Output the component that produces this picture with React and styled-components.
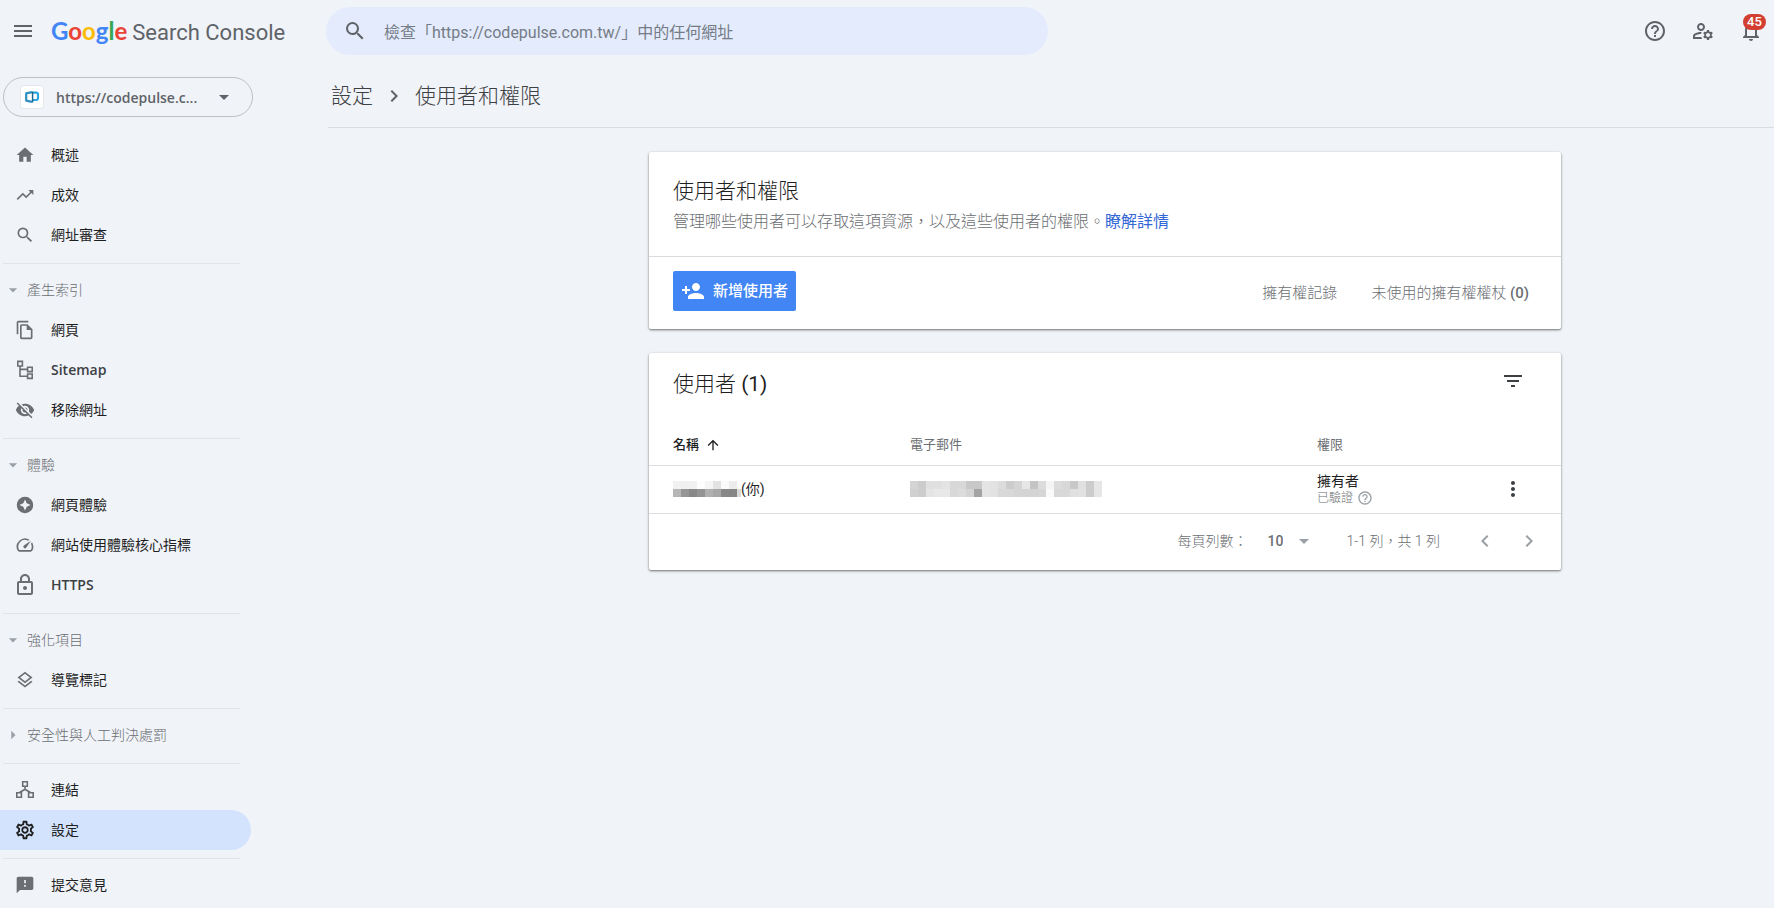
import React from 'react';
import styled, { createGlobalStyle } from 'styled-components';
import {
  MdArrowDropDown,
  MdArrowRight,
  MdArrowUpward,
  MdChevronLeft,
  MdChevronRight,
  MdFeedback,
  MdFilterList,
  MdHelpOutline,
  MdHome,
  MdMenu,
  MdMoreVert,
  MdOutlineFileCopy,
  MdOutlineLayers,
  MdOutlineLock,
  MdOutlineManageAccounts,
  MdOutlineNotifications,
  MdOutlineSettings,
  MdOutlineSpeed,
  MdPersonAdd,
  MdSearch,
  MdTrendingUp,
  MdVisibilityOff
} from 'react-icons/md';

const colors = {
  page: '#f0f3f8',
  search: '#e3ebfd',
  selected: '#d3e3fd',
  text: '#1f1f1f',
  heading: '#3c4043',
  grey: '#5f6368',
  midGrey: '#6b6e72',
  lightGrey: '#9aa0a6',
  line: '#dadce0',
  blue: '#4285f4',
  link: '#3367d6',
  red: '#d23f31'
};

const GlobalStyle = createGlobalStyle`
  * {
    box-sizing: border-box;
  }

  body {
    margin: 0;
    background: ${colors.page};
    color: ${colors.text};
    font-family: Roboto, 'Noto Sans CJK TC', sans-serif;
    font-size: 14px;
    line-height: 20px;
  }

  button,
  input,
  select {
    margin: 0;
    padding: 0;
    border: 0;
    background: none;
    color: inherit;
    font: inherit;
  }

  button,
  select {
    cursor: pointer;
  }

  a {
    color: inherit;
    text-decoration: none;
  }

  svg {
    display: block;
    flex-shrink: 0;
  }
`;

const Page = styled.div`
  min-height: 100vh;
  overflow-x: hidden;
`;

const Header = styled.header`
  display: grid;
  grid-template-columns: 315px 1fr auto;
  align-items: center;
  height: 62px;
  padding: 0 11px;
  color: ${colors.grey};
`;

const Brand = styled.div`
  display: flex;
  align-items: center;
  gap: 16px;
`;

const IconButton = styled.button`
  display: flex;
  position: relative;
  color: ${({ $color }) => $color || colors.grey};
`;

const Logo = styled.a`
  display: flex;
  align-items: baseline;
  gap: 5px;
  padding-top: 2px;
  font-size: 22px;
  line-height: 32px;
`;

const Google = styled.span`
  font-family: Lato, sans-serif;
  font-size: 24px;
  font-weight: 700;
`;

const Letter = styled.span`
  color: ${({ $color }) => $color};
`;

const SearchBox = styled.label`
  display: flex;
  align-items: center;
  gap: 17px;
  max-width: 722px;
  height: 48px;
  padding: 0 17px;
  border-radius: 24px;
  background: ${colors.search};
`;

const SearchInput = styled.input`
  flex: 1;
  min-width: 0;
  padding-top: 3px;
  outline: 0;
  font-size: 16px;
  line-height: 24px;

  &::placeholder {
    color: #757c86;
    opacity: 1;
  }
`;

const HeaderActions = styled.div`
  display: flex;
  gap: 24px;
`;

const Badge = styled.span`
  position: absolute;
  top: -5px;
  left: 4px;
  width: 23px;
  height: 16px;
  border-radius: 8px;
  background: ${colors.red};
  color: #fff;
  font-size: 13px;
  font-weight: 500;
  line-height: 16px;
  text-align: center;
`;

const Body = styled.div`
  display: flex;
  align-items: flex-start;
`;

const Sidebar = styled.aside`
  flex: 0 0 328px;
  padding-top: 15px;
`;

const Property = styled.div`
  display: flex;
  align-items: center;
  gap: 12px;
  width: 250px;
  height: 40px;
  margin: 0 0 18px 3px;
  padding: 0 16px;
  border: 1px solid #bdc1c6;
  border-radius: 20px;
  color: ${colors.grey};
`;

const Favicon = styled.span`
  display: flex;
  align-items: center;
  justify-content: center;
  flex: 0 0 24px;
  height: 24px;
  border: 1px solid #e4e7eb;
  border-radius: 3px;
  background: #fff;
`;

const PropertySelect = styled.select`
  flex: 1;
  min-width: 0;
  padding-top: 2px;
  appearance: none;
  outline: 0;
  color: ${colors.grey};
  font-family: 'Open Sans', sans-serif;
  font-weight: 600;
`;

const Divider = styled.hr`
  width: 237px;
  margin: 8px 0 6px 3px;
  border: 0;
  border-top: 1px solid #e0e3e8;
`;

const GroupHeader = styled.button`
  display: flex;
  align-items: center;
  gap: 4px;
  height: 40px;
  padding-left: 3px;
  color: ${colors.midGrey};
  font-weight: 300;

  svg {
    color: ${colors.lightGrey};
  }
`;

const NavItem = styled.a`
  display: flex;
  align-items: center;
  gap: 16px;
  width: 251px;
  height: 40px;
  padding-left: 15px;
  border-radius: 0 20px 20px 0;
  background: ${({ $selected }) => ($selected ? colors.selected : 'transparent')};
`;

const NavIcon = styled.span`
  display: flex;
  align-items: center;
  justify-content: center;
  width: 20px;
  color: ${({ $selected }) => ($selected ? colors.text : colors.midGrey)};
`;

const LatinLabel = styled.span`
  color: ${colors.heading};
  font-family: 'Open Sans', sans-serif;
  font-weight: 600;
`;

const Main = styled.main`
  flex: 1;
  min-width: 0;
`;

const Breadcrumb = styled.nav`
  display: flex;
  align-items: center;
  gap: 9px;
  height: 66px;
  padding: 2px 0 0 3px;
  border-bottom: 1px solid ${colors.line};
  color: ${colors.heading};
  font-size: 21px;
  font-weight: 300;

  svg {
    color: ${colors.grey};
  }
`;

const Content = styled.div`
  max-width: 1233px;
  margin-right: 213px;
  padding: 24px 0 24px 321px;
`;

const Card = styled.section`
  margin-bottom: 24px;
  border-radius: 2px;
  background: #fff;
  box-shadow: 0 1px 3px rgba(0, 0, 0, 0.3), 0 1px 2px rgba(0, 0, 0, 0.3);
`;

const CardIntro = styled.div`
  height: 105px;
  padding: 24px;
  border-bottom: 1px solid ${colors.line};
`;

const Title = styled.h2`
  margin: 0;
  color: ${colors.text};
  font-size: 21px;
  font-weight: 300;
  line-height: 30px;
`;

const Count = styled.span`
  font-weight: ${({ $bold }) => ($bold ? 500 : 400)};
`;

const Description = styled.p`
  margin: 0;
  color: ${colors.midGrey};
  font-size: 16px;
  font-weight: 300;
  line-height: 32px;
`;

const LearnMore = styled.a`
  color: ${colors.link};
  font-weight: 400;
`;

const Toolbar = styled.div`
  display: flex;
  align-items: center;
  justify-content: space-between;
  height: 72px;
  padding: 0 32px 4px 24px;
`;

const PrimaryButton = styled.button`
  display: flex;
  align-items: center;
  gap: 8px;
  height: 40px;
  padding: 0 8px;
  border-radius: 2px;
  background: ${colors.blue};
  color: #fff;
  font-size: 15px;
  font-weight: 500;
`;

const ToolbarLinks = styled.div`
  display: flex;
  gap: 34px;
  padding-top: 4px;
  color: ${colors.midGrey};
  font-size: 15px;
  font-weight: 300;
`;

const CardHeader = styled.div`
  display: flex;
  align-items: flex-start;
  justify-content: space-between;
  height: 72px;
  padding: 16px 36px 0 24px;
`;

const Table = styled.table`
  width: 100%;
  border-collapse: collapse;
  table-layout: fixed;
`;

const HeadCell = styled.th`
  width: ${({ $width }) => $width || 'auto'};
  height: 40px;
  padding: 0 0 0 24px;
  border-bottom: 1px solid ${colors.line};
  color: ${({ $sorted }) => ($sorted ? colors.text : colors.midGrey)};
  font-size: 13px;
  font-weight: ${({ $sorted }) => ($sorted ? 500 : 400)};
  text-align: left;
`;

const SortLabel = styled.span`
  display: flex;
  align-items: center;
  gap: 6px;
`;

const Cell = styled.td`
  height: 48px;
  padding: 0 0 0 24px;
  border-bottom: 1px solid ${colors.line};
`;

const UserName = styled.span`
  display: flex;
  align-items: center;
`;

const Role = styled.div`
  line-height: 18px;
`;

const Verified = styled.div`
  display: flex;
  align-items: center;
  gap: 4px;
  color: ${colors.midGrey};
  font-size: 12px;
  font-weight: 300;
  line-height: 16px;

  svg {
    color: ${colors.lightGrey};
  }
`;

const Pagination = styled.div`
  display: flex;
  align-items: center;
  justify-content: flex-end;
  height: 56px;
  padding: 0 20px 2px 0;
  color: ${colors.midGrey};
  font-weight: 300;
`;

const PageSize = styled.label`
  display: flex;
  align-items: center;
  gap: 20px;
`;

const SelectWrap = styled.span`
  display: flex;
  align-items: center;
  gap: 9px;

  svg {
    color: ${colors.lightGrey};
  }
`;

const PageSizeSelect = styled.select`
  appearance: none;
  outline: 0;
  font-weight: 500;
`;

const Range = styled.span`
  margin: 0 33px 0 30px;
`;

const PageButtons = styled.div`
  display: flex;
  gap: 20px;
`;

const SitemapIcon = () => (
  <svg width="20" height="20" viewBox="0 0 20 20" fill="none" stroke="currentColor" strokeWidth="1.6">
    <path d="M2.8 1.4h4.6v4.6H2.8zM12.6 7.2h4.6v4.4h-4.6zM12.6 14h4.6v4.4h-4.6zM5 6v10.2h7.6M5 9.4h7.6" />
  </svg>
);

const LinksIcon = () => (
  <svg width="20" height="20" viewBox="0 0 20 20" fill="none" stroke="currentColor" strokeWidth="1.6">
    <path d="M7.7 1.8h4.6v4.4H7.7zM1.8 12.8h4.6v4.4H1.8zM13.6 12.8h4.6v4.4h-4.6zM10 6.2v3.2M4.2 12.8L10 9.2l5.8 3.6" />
  </svg>
);

const ExperienceIcon = () => (
  <svg width="20" height="20" viewBox="0 0 20 20">
    <circle cx="10" cy="10" r="8.2" fill="currentColor" />
    <path d="M10 4.4l1.7 3.9 3.9 1.7-3.9 1.7-1.7 3.9-1.7-3.9L4.4 10l3.9-1.7z" fill={colors.page} />
  </svg>
);

const SiteLogo = () => (
  <svg width="16" height="14" viewBox="0 0 16 14" fill="none" strokeWidth="2.2" strokeLinejoin="round">
    <path d="M8 2.1L2.2 3.4v7.2L8 11.9" stroke="#2f8fc0" />
    <path d="M8.6 2.6h4.2L14 3.8v5L12.8 10H8.6" stroke="#2aa7dc" />
    <path d="M8.6 1.5v11" stroke="#1f6a94" strokeWidth="1.5" />
  </svg>
);

const namePixels = [
  ['f1', 'f0', 'f1', 'fd', 'f5', 'e2', 'fb', 'ec', 'fe'],
  ['b6', '96', '88', '94', 'b0', 'a8', '88', '86', 'd8']
];
const mailPixels = [
  'd4 cc e0 e0 e4 d8 d8 c8 c8 e4 e2 dc cc d4 e6 c4 dc f4 dc d8 c8 e0 cc e6'.split(' '),
  'd0 cc e4 e8 e8 d8 dc d4 a4 e4 e2 d8 d8 d4 d4 d4 d6 fa d8 d8 e0 e2 cc e6'.split(' ')
];

// Pixelated block that hides personal data, 8px per pixel
const Mosaic = ({ rows, width, label }) => (
  <svg width={width} height="16" role="img" aria-label={label} shapeRendering="crispEdges">
    {rows.map((row, y) =>
      row.map((shade, x) => (
        <rect key={`${x}-${y}`} x={x * 8} y={y * 8} width="8" height="8" fill={`#${shade.repeat(3)}`} />
      ))
    )}
  </svg>
);

const groups = [
  {
    items: [
      { label: '概述', icon: <MdHome size={20} /> },
      { label: '成效', icon: <MdTrendingUp size={20} /> },
      { label: '網址審查', icon: <MdSearch size={20} /> }
    ]
  },
  {
    title: '產生索引',
    items: [
      { label: '網頁', icon: <MdOutlineFileCopy size={20} /> },
      { label: 'Sitemap', icon: <SitemapIcon />, latin: true },
      { label: '移除網址', icon: <MdVisibilityOff size={20} /> }
    ]
  },
  {
    title: '體驗',
    items: [
      { label: '網頁體驗', icon: <ExperienceIcon /> },
      { label: '網站使用體驗核心指標', icon: <MdOutlineSpeed size={20} /> },
      { label: 'HTTPS', icon: <MdOutlineLock size={24} />, latin: true }
    ]
  },
  {
    title: '強化項目',
    items: [{ label: '導覽標記', icon: <MdOutlineLayers size={20} /> }]
  },
  { title: '安全性與人工判決處罰', collapsed: true, items: [] },
  {
    items: [
      { label: '連結', icon: <LinksIcon /> },
      { label: '設定', icon: <MdOutlineSettings size={22} />, selected: true }
    ]
  },
  { items: [{ label: '提交意見', icon: <MdFeedback size={20} /> }] }
];

const letters = [
  ['G', '#4285f4'],
  ['o', '#ea4335'],
  ['o', '#fbbc04'],
  ['g', '#4285f4'],
  ['l', '#34a853'],
  ['e', '#ea4335']
];

function TopBar() {
  return (
    <Header>
      <Brand>
        <IconButton aria-label="主選單">
          <MdMenu size={24} />
        </IconButton>
        <Logo href="#">
          <Google>
            {letters.map(([letter, color], i) => (
              <Letter key={i} $color={color}>
                {letter}
              </Letter>
            ))}
          </Google>
          Search Console
        </Logo>
      </Brand>
      <SearchBox>
        <MdSearch size={24} />
        <SearchInput aria-label="網址檢查" placeholder="檢查「https://codepulse.com.tw/」中的任何網址" />
      </SearchBox>
      <HeaderActions>
        <IconButton aria-label="說明">
          <MdHelpOutline size={24} />
        </IconButton>
        <IconButton aria-label="使用者設定">
          <MdOutlineManageAccounts size={24} />
        </IconButton>
        <IconButton aria-label="通知">
          <MdOutlineNotifications size={24} />
          <Badge>45</Badge>
        </IconButton>
      </HeaderActions>
    </Header>
  );
}

function SideNav() {
  return (
    <Sidebar>
      <Property>
        <Favicon>
          <SiteLogo />
        </Favicon>
        <PropertySelect aria-label="資源">
          <option>https://codepulse.c...</option>
        </PropertySelect>
        <MdArrowDropDown size={24} />
      </Property>
      <nav>
        {groups.map((group, i) => (
          <React.Fragment key={i}>
            {i > 0 && <Divider />}
            {group.title && (
              <GroupHeader aria-expanded={!group.collapsed}>
                {group.collapsed ? <MdArrowRight size={20} /> : <MdArrowDropDown size={20} />}
                {group.title}
              </GroupHeader>
            )}
            {group.items.map(({ label, icon, latin, selected }) => (
              <NavItem key={label} href="#" $selected={selected}>
                <NavIcon $selected={selected}>{icon}</NavIcon>
                {latin ? <LatinLabel>{label}</LatinLabel> : label}
              </NavItem>
            ))}
          </React.Fragment>
        ))}
      </nav>
    </Sidebar>
  );
}

function UsersCard() {
  return (
    <Card>
      <CardHeader>
        <Title>
          使用者 <Count>(1)</Count>
        </Title>
        <IconButton aria-label="篩選" $color={colors.heading}>
          <MdFilterList size={24} />
        </IconButton>
      </CardHeader>
      <Table>
        <thead>
          <tr>
            <HeadCell $sorted $width="26%">
              <SortLabel>
                名稱
                <MdArrowUpward size={16} />
              </SortLabel>
            </HeadCell>
            <HeadCell>電子郵件</HeadCell>
            <HeadCell $width="184px">權限</HeadCell>
            <HeadCell $width="84px" aria-label="選項" />
          </tr>
        </thead>
        <tbody>
          <tr>
            <Cell>
              <UserName>
                <Mosaic rows={namePixels} width={68} label="名稱" />
                (你)
              </UserName>
            </Cell>
            <Cell>
              <Mosaic rows={mailPixels} width={192} label="電子郵件" />
            </Cell>
            <Cell>
              <Role>擁有者</Role>
              <Verified>
                已驗證
                <MdHelpOutline size={16} />
              </Verified>
            </Cell>
            <Cell>
              <IconButton aria-label="更多選項" $color={colors.heading}>
                <MdMoreVert size={24} />
              </IconButton>
            </Cell>
          </tr>
        </tbody>
      </Table>
      <Pagination>
        <PageSize>
          每頁列數：
          <SelectWrap>
            <PageSizeSelect>
              <option>10</option>
            </PageSizeSelect>
            <MdArrowDropDown size={24} />
          </SelectWrap>
        </PageSize>
        <Range>1-1 列，共 1 列</Range>
        <PageButtons>
          <IconButton aria-label="上一頁" $color={colors.lightGrey}>
            <MdChevronLeft size={24} />
          </IconButton>
          <IconButton aria-label="下一頁" $color={colors.lightGrey}>
            <MdChevronRight size={24} />
          </IconButton>
        </PageButtons>
      </Pagination>
    </Card>
  );
}

export default function App() {
  return (
    <Page>
      <GlobalStyle />
      <TopBar />
      <Body>
        <SideNav />
        <Main>
          <Breadcrumb>
            <a href="#">設定</a>
            <MdChevronRight size={24} />
            <span>使用者和權限</span>
          </Breadcrumb>
          <Content>
            <Card>
              <CardIntro>
                <Title>使用者和權限</Title>
                <Description>
                  管理哪些使用者可以存取這項資源，以及這些使用者的權限。<LearnMore href="#">瞭解詳情</LearnMore>
                </Description>
              </CardIntro>
              <Toolbar>
                <PrimaryButton>
                  <MdPersonAdd size={24} />
                  新增使用者
                </PrimaryButton>
                <ToolbarLinks>
                  <a href="#">擁有權記錄</a>
                  <a href="#">
                    未使用的擁有權權杖 <Count $bold>(0)</Count>
                  </a>
                </ToolbarLinks>
              </Toolbar>
            </Card>
            <UsersCard />
          </Content>
        </Main>
      </Body>
    </Page>
  );
}
